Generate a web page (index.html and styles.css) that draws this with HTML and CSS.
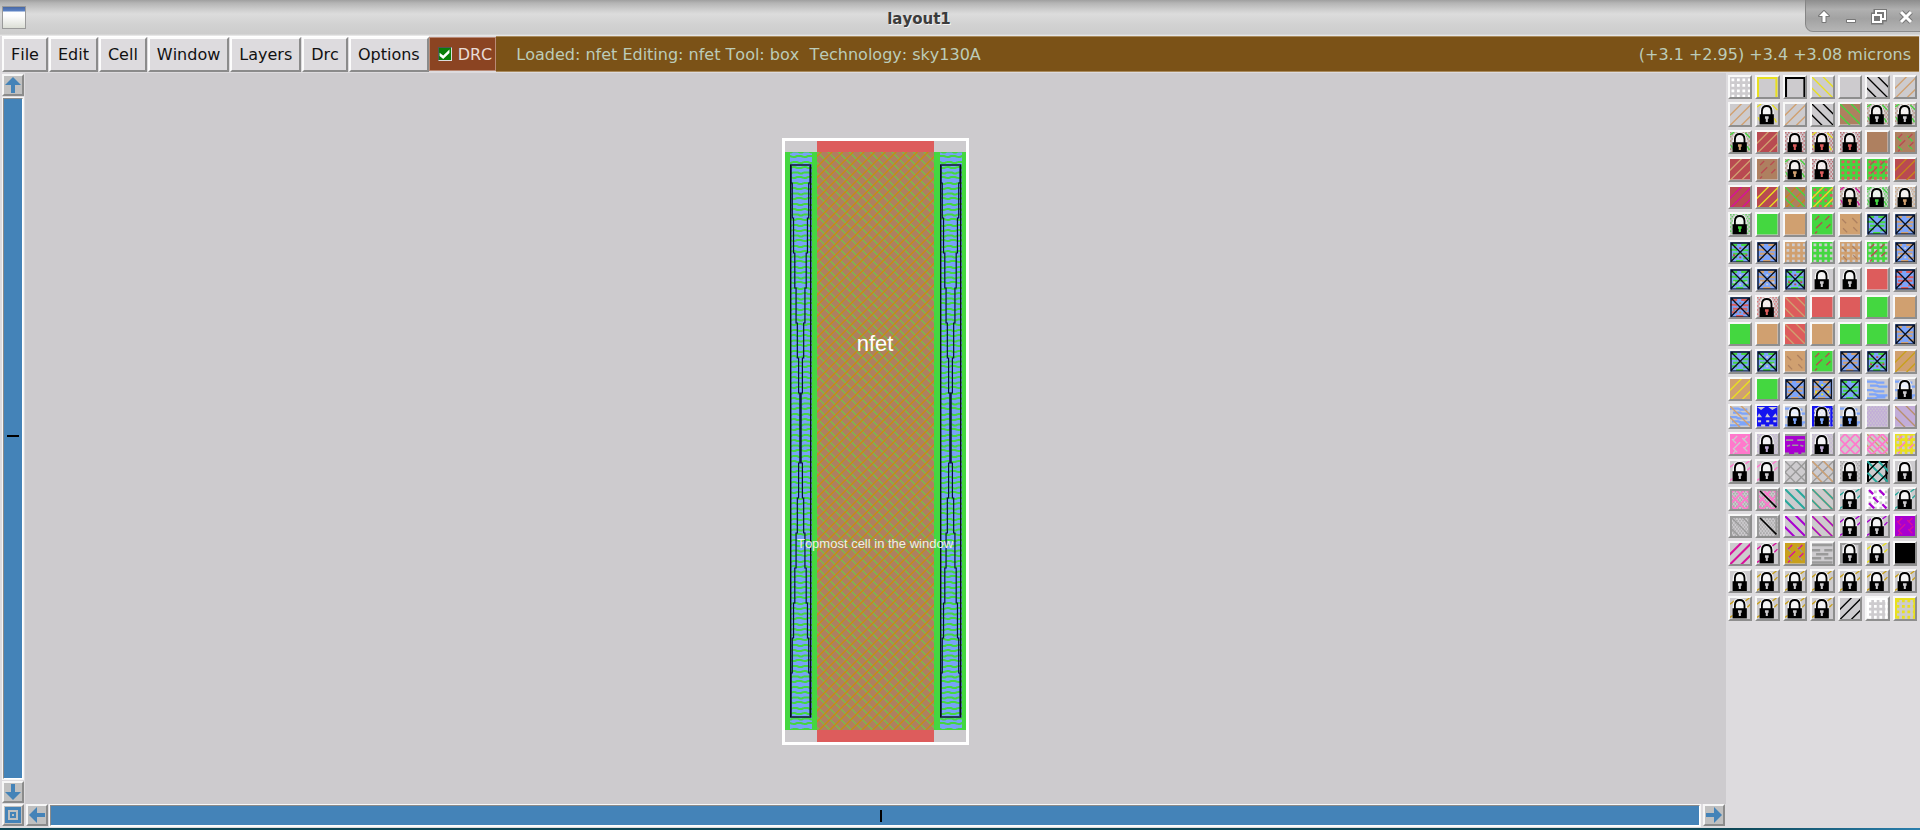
FILE: index.html
```html
<!DOCTYPE html>
<html lang="en">
<head>
<meta charset="utf-8">
<title>layout1</title>
<link rel="stylesheet" href="styles.css">
</head>
<body>
<header class="titlebar">
  <span class="app-icon"></span>
  <h1 class="title">layout1</h1>
  <div class="controls">
    <button type="button" class="control" aria-label="Shade"><svg viewBox="0 0 16 16"><path class="halo" d="M8 2l5 5H9.500v6h-3V7H3z"/><path class="solid" d="M8 2l5 5H9.500v6h-3V7H3z"/></svg></button>
    <button type="button" class="control" aria-label="Minimize"><svg viewBox="0 0 16 16"><path class="halo" d="M4 11h8v2H4z"/><path class="solid" d="M4 11h8v2H4z"/></svg></button>
    <button type="button" class="control" aria-label="Restore"><svg viewBox="0 0 16 16"><path class="ring-halo" d="M5 5V2h9v8h-3M2 6h8v7H2zM4 9h4"/><path class="ring" d="M5 5V2h9v8h-3M2 6h8v7H2z"/></svg></button>
    <button type="button" class="control" aria-label="Close"><svg viewBox="0 0 16 16"><path class="ring-halo" d="M3 3l10 10M13 3L3 13"/><path class="ring thick" d="M3 3l10 10M13 3L3 13"/></svg></button>
  </div>
</header>

<div class="menubar">
  <nav class="menus">
    <button type="button" class="menu">File</button>
    <button type="button" class="menu">Edit</button>
    <button type="button" class="menu">Cell</button>
    <button type="button" class="menu">Window</button>
    <button type="button" class="menu">Layers</button>
    <button type="button" class="menu">Drc</button>
    <button type="button" class="menu">Options</button>
  </nav>
  <label class="drc"><input type="checkbox" class="drc-box" checked>DRC</label>
  <div class="status">
    <span>Loaded: nfet Editing: nfet Tool: box&nbsp; Technology: sky130A</span>
    <span>(+3.1 +2.95) +3.4 +3.08 microns</span>
  </div>
</div>

<main class="workspace">
  <div class="rail-v">
    <button type="button" class="arrow" aria-label="Scroll up"><svg viewBox="0 0 18 18"><path d="M9 1l8 8h-6v8H7V9H1z"/></svg></button>
    <div class="slider slider-v" role="scrollbar" aria-controls="canvas" aria-orientation="vertical" aria-valuenow="50"><span class="tick"></span></div>
    <button type="button" class="arrow" aria-label="Scroll down"><svg viewBox="0 0 18 18"><path d="M9 17l8-8h-6V1H7v8H1z"/></svg></button>
  </div>

  <section class="canvas" id="canvas">
    <svg class="cell" viewBox="0 0 187 607" role="img" aria-label="nfet cell layout">
      <defs>
        <pattern id="hatch" width="32" height="32" patternUnits="userSpaceOnUse">
          <g id="hatch-lines"></g>
        </pattern>
        <pattern id="waves" width="11" height="21" patternUnits="userSpaceOnUse">
          <path class="blue" d="M0 0h11v21H0z"/>
          <path class="wave" d="M0 3h4l2 1h3l2-1M0 8h2l2 1h4l3-1M0 13.500h5l2 1h2l2-1M0 19h2l2-1h4l3 1"/>
        </pattern>
      </defs>
      <rect class="bounds" x="1.500" y="1.500" width="184" height="604"/>
      <rect class="poly" x="35" y="3" width="117" height="601"/>
      <rect class="diff" x="3" y="14" width="181" height="578"/>
      <rect class="gate" x="35" y="14" width="117" height="578"/>
      <rect fill="url(#hatch)" x="35" y="14" width="117" height="578"/>
      <g id="contacts"></g>
      <text class="name" x="93" y="213">nfet</text>
      <text class="note" x="93" y="410">Topmost cell in the window</text>
    </svg>
  </section>

  <aside class="palette" id="palette" aria-label="Layers"></aside>

  <button type="button" class="arrow corner" aria-label="Fit view"><svg viewBox="0 0 18 18"><path fill-rule="evenodd" d="M1 1h16v16H1zM4 4v10h10V4zM6 6h6v6H6zM8 8v2h2V8z"/></svg></button>
  <div class="rail-h">
    <button type="button" class="arrow" aria-label="Scroll left"><svg viewBox="0 0 18 18"><path d="M1 9l8-8v6h8v4H9v6z"/></svg></button>
    <div class="slider slider-h" role="scrollbar" aria-controls="canvas" aria-orientation="horizontal" aria-valuenow="50"><span class="tick"></span></div>
    <button type="button" class="arrow" aria-label="Scroll right"><svg viewBox="0 0 18 18"><path d="M17 9L9 1v6H1v4h8v6z"/></svg></button>
  </div>
</main>
<footer class="edge"></footer>
<script src="script.js"></script>
</body>
</html>
```

FILE: styles.css
```css
* { box-sizing: border-box; }

body {
  margin: 0;
  height: 100vh;
  display: flex;
  flex-direction: column;
  background: #dddbde;
  font-family: "DejaVu Sans", sans-serif;
  font-size: 16px;
  font-kerning: none;
  color: #111;
  overflow: hidden;
}

button { font: inherit; color: inherit; margin: 0; padding: 0; }

/* Title bar */
.titlebar {
  height: 36px;
  flex: none;
  display: grid;
  grid-template-columns: 115px 1fr 115px;
  align-items: start;
  background: linear-gradient(#9f9f9f 0, #b4b4b4 3px, #cfcfcf 10px, #dcdcdc 14px, #d2d2d2 24px, #cdcdcd 34px, #eee 36px);
}
.app-icon {
  width: 24px;
  height: 23px;
  margin: 6px 0 0 2px;
  border: 1px solid #9a9a9a;
  background: linear-gradient(#4868a4 0, #5b82c4 4px, #fff 5px, #fdfdfd 9px, #dcdfd6);
}
.title {
  margin: 0;
  padding-right: 82px;
  line-height: 38px;
  font-size: 15px;
  text-align: center;
  color: #3c3c3c;
  text-shadow: 1px 1px 0 #f4f4f4;
}
.controls {
  height: 32px;
  display: flex;
  align-items: center;
  justify-content: space-around;
  padding: 2px 0 0 4px;
  border-left: 1px solid #858585;
  border-bottom: 1px solid #8b8b8b;
  border-bottom-left-radius: 8px;
  background: linear-gradient(#8d8d8d, #b0b0b0 30%, #a2a2a2 60%, #b5b5b5);
}
.control { width: 18px; height: 18px; border: 0; background: none; }
.control svg { display: block; width: 16px; height: 16px; margin: auto; }
.halo { fill: #777; stroke: #777; stroke-width: 2; stroke-linejoin: round; }
.solid { fill: #fff; }
.ring-halo { fill: none; stroke: #777; stroke-width: 5; }
.ring { fill: none; stroke: #fff; stroke-width: 2; }
.thick { stroke-width: 3; }

/* Menu bar */
.menubar { flex: none; height: 37px; display: flex; padding: 0 1px 1px 2px; }
.menus { display: flex; gap: 1px; border-top: 1px solid #fff; }
.menu {
  padding: 0 7px;
  background: #dddbde;
  border: 2px solid;
  border-color: #fcfcfc #8b8b8b #8b8b8b #fcfcfc;
  line-height: 30px;
}
.drc {
  display: flex;
  align-items: center;
  gap: 6px;
  padding: 0 3px 0 8px;
  margin: 1px 0;
  border: 1px solid #b98a76;
  background: #8b4422;
  color: #e8dcd6;
}
.drc-box {
  appearance: none;
  width: 14px;
  height: 14px;
  margin: 0;
  border: 1px solid;
  border-color: #555 #ddd #ddd #555;
  background: #0a7d0a;
}
.drc-box:checked::before {
  content: "";
  display: block;
  width: 12px;
  height: 12px;
  background: #fff;
  clip-path: polygon(8% 40%, 38% 62%, 90% 12%, 90% 42%, 38% 92%, 8% 66%);
}
.status {
  flex: 1;
  display: flex;
  align-items: center;
  justify-content: space-between;
  padding: 0 8px 0 20px;
  border: solid #a98a5c;
  border-width: 1px 0;
  background: #7b5217;
  color: #bcccb9;
}

/* Workspace */
.workspace {
  flex: 1;
  min-height: 0;
  display: grid;
  grid-template-columns: 25px 1fr 194px;
  grid-template-rows: 1fr 24px;
}
.rail-v { display: flex; flex-direction: column; gap: 1px; padding: 1px 1px 1px 2px; }
.rail-h { display: flex; gap: 1px; padding: 0 1px 1px; }
.canvas {
  display: flex;
  align-items: center;
  justify-content: center;
  padding-top: 6px;
  background: #cdcbce;
}
.palette {
  grid-row: span 2;
  align-content: start;
  display: grid;
  grid-template-columns: repeat(7, 1fr);
  gap: 3px;
  padding: 2px 3px 0 2px;
}
.arrow {
  flex: none;
  width: 22px;
  height: 22px;
  border: 2px solid;
  border-color: #f6f6f6 #8b8b8b #8b8b8b #f6f6f6;
  background: #c0c0c0;
}
.arrow svg { display: block; width: 18px; height: 18px; fill: #4483b8; }
.corner { margin-left: 2px; }
.slider {
  flex: 1;
  display: flex;
  align-items: center;
  justify-content: center;
  border: 2px solid;
  border-color: #8b8b8b #fff #fff #8b8b8b;
  outline: 1px solid #f6f6f6;
  outline-offset: -1px;
  background: #4483b8;
}
.slider-v { padding-bottom: 6px; }
.slider-h { padding-left: 12px; margin-right: 1px; }
.tick { background: #000; }
.slider-v .tick { width: 12px; height: 2px; }
.slider-h .tick { width: 2px; height: 12px; }
.edge { flex: none; height: 2px; background: linear-gradient(90deg, #0c4553 90%, #2a7fae); }

/* Layer swatches */
.tile {
  aspect-ratio: 1;
  border: 2px solid;
  border-color: #f8f8f8 #8e8e8e #8e8e8e #f8f8f8;
  background: #cdcbce;
}
.tile svg { display: block; width: 100%; height: 100%; }

/* Cell drawing */
.cell { width: 187px; height: 607px; }
.bounds { fill: #cdcbce; stroke: #fff; stroke-width: 3; }
.poly { fill: #dd5c5c; }
.diff { fill: #44d740; }
.gate { fill: #ae8060; }
.blue { fill: #78a2f8; }
.wave { fill: none; stroke: #44d740; stroke-width: 2; }
.outline { fill: none; stroke: #050a20; stroke-width: 1.4; }
.diag { fill: none; stroke: #06103a; stroke-width: 1.2; }
.name, .note {
  font-family: "Liberation Sans", sans-serif;
  text-anchor: middle;
  fill: #fff;
}
.name { font-size: 22px; }
.note { font-size: 13px; fill: #f0eee6; }
```

FILE: script.js
```js
const C = {
  w: '#ffffff', y: '#e8e020', k: '#000000', t: '#d0a070', g: '#44d740',
  b: '#ae8060', r: '#b94a51', R: '#dd5c5c', o: '#c8841c', m: '#d8109c',
  l: '#7ca4fa', L: '#1414f0', v: '#c2add8', p: '#ff78cc', P: '#a800d0',
  e: '#28a89c', s: '#9a9a9a', c: '#cdcbce', d: '#c8a01c', a: '#b8906c'
};

const line = (d, color, width = 1.3) =>
  `<path d="${d}" fill="none" stroke="${color}" stroke-width="${width}"/>`;
const down = (color, width) =>
  line('M-2 -2L22 22M9 -2L22 11M-2 9L11 22', color, width);
const up = (color, width) =>
  line('M-1 12L12 -1M-1 22L22 -1M10 22L22 10', color, width);

function dots(color) {
  let d = '';
  for (let row = 0; row < 4; row++) {
    for (let col = 0; col < 4; col++) {
      d += `M${1.5 + col * 5.33} ${1.5 + row * 5.33}h2.7v2.7h-2.7z`;
    }
  }
  return `<path d="${d}" fill="${color}"/>`;
}

function noise(color, edge) {
  let d = '';
  for (let y = 0; y < 20; y += 2) {
    for (let x = (y / 2) % 2 * 1.5; x < 20; x += 3) d += `M${x} ${y}h1.5v1.5h-1.5z`;
  }
  return `<path d="${d}" fill="${color}" opacity=".75"/>` +
    (edge ? line('M0 3L4 0M15 1L20 6M1 13L3 17M17 14L19 18', edge) : '');
}

function lock(color) {
  return `<path d="M2.500 20V9Q2.500 0 9.500 0T16.500 9V20z" fill="#fff" opacity=".8"/>
    <path d="M4.800 11V7Q5 2 9.500 2T14.200 7V11" fill="none" stroke="#000" stroke-width="1.800"/>
    <path d="M2.500 10H16.500V20H2.500z" fill="#000"/>
    <path d="M7.800 12h3.600v2.500h-.8v3h-2v-3h-.8z" fill="${color}"/>`;
}

const waves = color =>
  line('M0 2.500h8l2 1h7M3 6.500h7l2 1h8M0 11h6l2 1h9M2 15h6l3 1h9M0 19h8l2-1h8', color, 2.2);

function contact(color, extra) {
  return `<path d="M0 0h20v20H0z" fill="${C.l}"/>` +
    line('M1 3h6M11 3h7M0 7.500h5l2 1M12 8h6M3 11.500h14M2 15h5M13 16h6M6 18.500h7', color, 2) +
    (extra ? line('M4 5h2M14 5h2M3 13h2M15 13h2M9 6h2M9 15h2', extra, 1.8) : '') +
    line('M1 20V1H19V20M1 1L19 19M19 1L1 19', '#081020', 1.3) +
    line('M1 19.500H19', '#081020', 1);
}

/* Each part is an operator followed by colour keys. */
const ops = {
  f: a => `<path d="M0 0h20v20H0z" fill="${a}"/>`,
  D: a => down(a),
  U: a => up(a),
  B: a => down(a, 2),
  W: a => up(a, 2),
  o: a => dots(a),
  n: a => noise(a),
  q: (a, b) => noise(a, b),
  K: a => lock(a || C.c),
  w: a => waves(a),
  X: (a, b) => contact(a, b),
  F: a => line('M1 20V1H19V20', a, 2),
  u: a => line('M3 6L7 2M13 6L17 2M4 14L10 8M14 14L18 10M3 19L5 17', a),
  h: a => line('M2 5L6 9M12 4L17 9M3 14L7 18M13 13L17 17', a),
  j: a => line('M2 1L6 5M12 1L17 6M6 8L11 13M2 14L7 19M15 15L19 19', a, 2.2),
  x: a => line('M-1 4L16 21M-1 14L6 21M4 -1L21 16M14 -1L21 6M-1 6L6 -1M-1 16L16 -1M4 21L21 4M14 21L21 14', a, 1.7),
  z: a => line('M3 2L19 18', a, 1.6),
  e: a => line('M0 6L4 3M15 3L19 0M0 19L3 17M17 9L20 6', a),
  T: a => `<path d="M4 4L8 1H0zM15 4L20 1H11zM0 11h5L2 7zM8 11h5l-3-4zM15 11h5l-2-4zM1 14h3v2H1zM9 14h3v2H9zM16 14h3v2h-3zM4 18h4v2H4zM12 18h4v2h-4z" fill="${a}"/>`,
  Q: a => line('M0 1h20', a, 2) + line('M1 6h7M12 6h7M7 11h6M0 19h4M9 19h4M16 19h4M2 12l3-1M15 11l3 1', a, 1.6),
  H: a => line('M0 2h20M0 7h8M12 7h8M4 11h12M0 15h9M12 15h8M0 19h20', a, 2.4)
};

const rows = [
  'ow|Fy|Fk|Dy||Dk|Ut',
  'Ut|qcy K|Ut|Dk|fb Dg|qbg K|qbg K',
  'qbg Kt|fr Ut|nr KR|qry KR|nr KR|fb|fb hg ur',
  'fr Ut|fb ur|qbg Kt|nr KR|fg oR|fg oR ur|fr Uo',
  'fr Um|fr Uy|fb Uo Dg|fg oR Uy|qbm Kt|qcg ng Kg|nt Kt',
  'ng Kg|fg|ft|fg ur|ft hb|Xg|Xt',
  'Xgr|Xt|ft oc|fg oc|ft oc hb|fg oc ur|Xtc',
  'Xgc|Xtc|Xgr|ecc K|ecc K|fR|XR',
  'XRb|nR KR|fR Dt|fR|fR|fg|ft',
  'fg|ft|fR Dt|ft|fg|fg|Xt',
  'Xg|Xgc|ft hb|fg ur|Xt|Xgr|ft Ud',
  'ft Uy|fg|Xt|Xty|Xg|wl|wl K',
  'wl Dt|fL Tc|wl Kl|FL nL Kl|wl Kl|fv nc|fv Da',
  'fp hc uc|nv Kv|fP Qs|nv Kv|xp|Dt xp|fy oc up',
  'ep K|ep K|Ds Us|Ds Us Dt|ns K|Fk Be Uk|K',
  'ns xp Fs|ns xp Fs zk|Be|Bt De|ee K|fw oc jP|ee K',
  'fc ns Ds Fs|fc ns Fs zk|BP|Bt DP|eP K|eP K|fP um hm',
  'Wm|em K|fd hs um|Hs|Fs K|ey K|fk',
  'K|ed K|ed K|ed K|ed K|ed K|ed K',
  'ed K|ed K|ed K|ed K|Uk|Fw ow|Fy oy'
];

document.getElementById('palette').innerHTML = rows.map((row, r) =>
  row.split('|').map((spec, c) => {
    const art = spec.split(' ').filter(Boolean)
      .map(part => ops[part[0]](C[part[1]], C[part[2]])).join('');
    return `<button type="button" class="tile" aria-label="Layer ${r * 7 + c + 1}"><svg viewBox="0 0 20 20">${art}</svg></button>`;
  }).join('')).join('');

/* Gate hatching: three lines each way in a 32px repeat. */
let hatch = '';
for (let i = -3; i <= 6; i++) {
  const x = i * 32 / 3;
  hatch += line(`M${x - 2} -2L${x + 34} 34`, '#70c444', 1.2);
}
for (let i = -3; i <= 6; i++) {
  const x = i * 32 / 3;
  hatch += line(`M${x + 2} -2L${x - 34} 34`, '#c48c14', 1.4);
}
document.getElementById('hatch-lines').innerHTML = hatch;

/* Contacts: the diagonals of a tall narrow box, drawn as steps. */
document.getElementById('contacts').innerHTML = [8, 158].map(x => {
  let a = `M${x + 1} 28`;
  let b = `M${x + 20} 28`;
  for (let i = 0; i <= 15; i++) {
    const end = i === 15 ? 578 : 45 + i * 35;
    a += `H${x + 1 + i * 19 / 15}V${end}`;
    b += `H${x + 20 - i * 19 / 15}V${end}`;
  }
  return `<rect x="${x}" y="14" width="22" height="578" fill="url(#waves)"/>
    <path class="diag" d="${a}${b}"/>
    <rect class="outline" x="${x + 0.7}" y="27" width="20" height="552"/>`;
}).join('');
```
